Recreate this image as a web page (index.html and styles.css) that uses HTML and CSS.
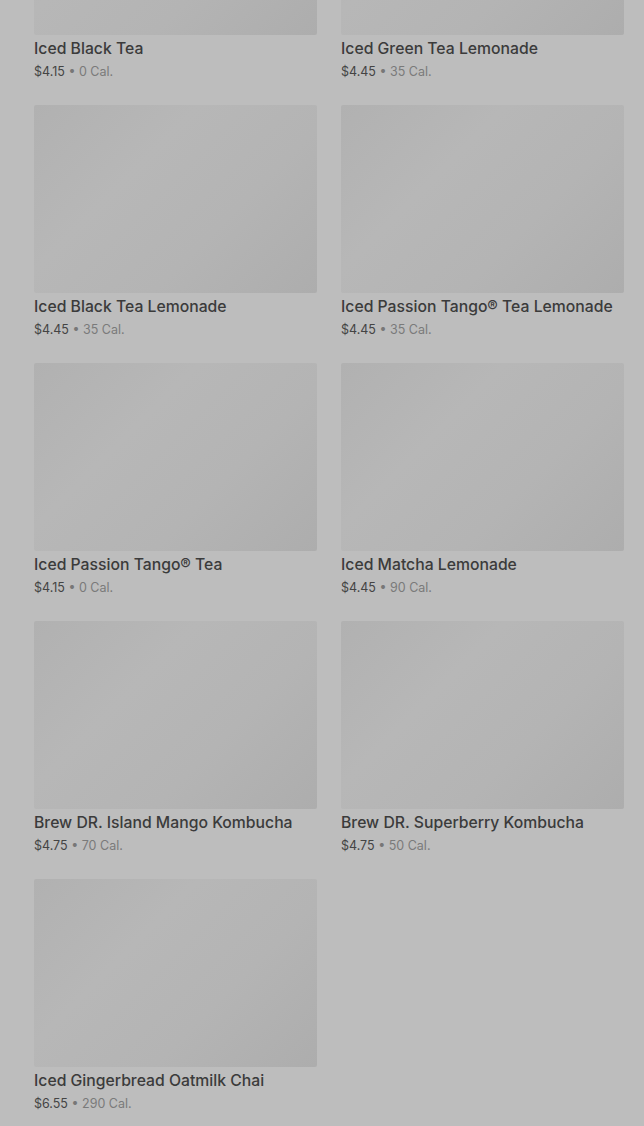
FILE: index.html
```html
<!DOCTYPE html>
<html lang="en">
<head>
    <meta charset="UTF-8">
    <meta name="viewport" content="width=device-width, initial-scale=1.0">
    <title>Menu - Iced Tea</title>
    <link rel="stylesheet" href="styles.css">
</head>
<body>
    <div class="overlay">
        <div class="product-grid">
            <div class="product">
                <div class="product-image"></div>
                <div class="product-name">Iced Black Tea</div>
                <div class="product-meta"><span class="price">$4.15</span> &bull; <span class="cal">0 Cal.</span></div>
            </div>
            <div class="product">
                <div class="product-image"></div>
                <div class="product-name">Iced Green Tea Lemonade</div>
                <div class="product-meta"><span class="price">$4.45</span> &bull; <span class="cal">35 Cal.</span></div>
            </div>
            <div class="product">
                <div class="product-image"></div>
                <div class="product-name">Iced Black Tea Lemonade</div>
                <div class="product-meta"><span class="price">$4.45</span> &bull; <span class="cal">35 Cal.</span></div>
            </div>
            <div class="product">
                <div class="product-image"></div>
                <div class="product-name">Iced Passion Tango&reg; Tea Lemonade</div>
                <div class="product-meta"><span class="price">$4.45</span> &bull; <span class="cal">35 Cal.</span></div>
            </div>
            <div class="product">
                <div class="product-image"></div>
                <div class="product-name">Iced Passion Tango&reg; Tea</div>
                <div class="product-meta"><span class="price">$4.15</span> &bull; <span class="cal">0 Cal.</span></div>
            </div>
            <div class="product">
                <div class="product-image"></div>
                <div class="product-name">Iced Matcha Lemonade</div>
                <div class="product-meta"><span class="price">$4.45</span> &bull; <span class="cal">90 Cal.</span></div>
            </div>
            <div class="product">
                <div class="product-image"></div>
                <div class="product-name">Brew DR. Island Mango Kombucha</div>
                <div class="product-meta"><span class="price">$4.75</span> &bull; <span class="cal">70 Cal.</span></div>
            </div>
            <div class="product">
                <div class="product-image"></div>
                <div class="product-name">Brew DR. Superberry Kombucha</div>
                <div class="product-meta"><span class="price">$4.75</span> &bull; <span class="cal">50 Cal.</span></div>
            </div>
            <div class="product">
                <div class="product-image"></div>
                <div class="product-name">Iced Gingerbread Oatmilk Chai</div>
                <div class="product-meta"><span class="price">$6.55</span> &bull; <span class="cal">290 Cal.</span></div>
            </div>
        </div>
    </div>
</body>
</html>
```

FILE: styles.css
```css
body {
    font-family: Inter, 'Liberation Sans', sans-serif;
    margin: 0;
    padding: 0;
    background-color: #bdbdbd;
    overflow: hidden;
}
.overlay {
    height: 1126px;
    overflow: hidden;
}
.product-grid {
    display: grid;
    grid-template-columns: 283px 283px;
    column-gap: 24px;
    row-gap: 23px;
    padding: 0 20px 0 34px;
    margin-top: -153px;
}
.product {
    display: flex;
    flex-direction: column;
}
.product-image {
    height: 188px;
    background: linear-gradient(135deg, #b1b1b1 0%, #b7b7b7 35%, #b4b4b4 65%, #adadad 100%);
    border-radius: 2px;
}
.product-name {
    margin-top: 3px;
    font-size: 15.75px;
    font-weight: 500;
    color: #3b3b3b;
    line-height: 22px;
    white-space: nowrap;
}
.product-meta {
    font-size: 12.5px;
    line-height: 20px;
    color: #777;
    margin-top: 2px;
}
.price {
    color: #444;
}
.cal {
    color: #7a7a7a;
}
```
